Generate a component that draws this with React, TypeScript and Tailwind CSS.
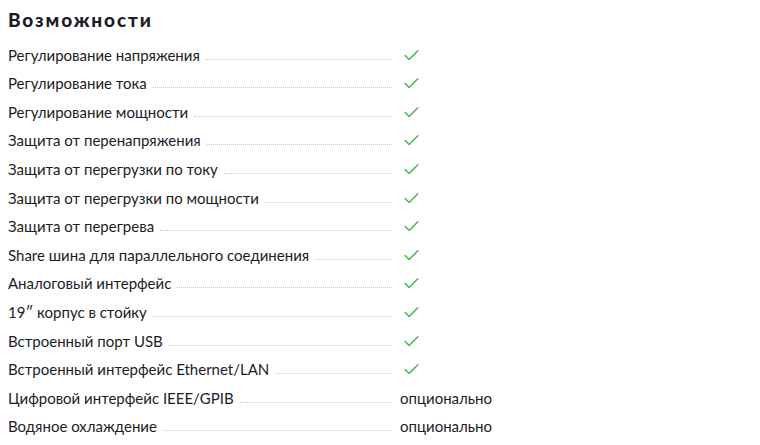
import { Check } from "lucide-react";

type Feature = {
  label: string;
  value: "yes" | string;
};

const FEATURES: Feature[] = [
  { label: "Регулирование напряжения", value: "yes" },
  { label: "Регулирование тока", value: "yes" },
  { label: "Регулирование мощности", value: "yes" },
  { label: "Защита от перенапряжения", value: "yes" },
  { label: "Защита от перегрузки по току", value: "yes" },
  { label: "Защита от перегрузки по мощности", value: "yes" },
  { label: "Защита от перегрева", value: "yes" },
  { label: "Share шина для параллельного соединения", value: "yes" },
  { label: "Аналоговый интерфейс", value: "yes" },
  { label: "19″ корпус в стойку", value: "yes" },
  { label: "Встроенный порт USB", value: "yes" },
  { label: "Встроенный интерфейс Ethernet/LAN", value: "yes" },
  { label: "Цифровой интерфейс IEEE/GPIB", value: "опционально" },
  { label: "Водяное охлаждение", value: "опционально" },
];

export default function App() {
  return (
    <div className="w-[760px] h-[445px] bg-white px-2 pt-[9px] text-[#1c1c28] font-['Lato','Noto_Sans',sans-serif]">
      <h2 className="text-[19px] font-black leading-[22px] tracking-[1.9px]">Возможности</h2>
      <ul className="mt-[10px]">
        {FEATURES.map((f) => (
          <li key={f.label} className="flex items-end h-[28.6px] pb-[6px]">
            <div className="flex items-end w-[384px]">
              <span className="text-[15px] leading-[18px] whitespace-nowrap">{f.label}</span>
              <span className="flex-1 ml-[6px] mb-[4px] border-b border-dotted border-[#c5c9d2]" />
            </div>
            <div className="ml-[8px] flex items-end h-[18px]">
              {f.value === "yes" ? (
                <Check size={19} strokeWidth={1.8} className="text-[#43b649] ml-[2px] -mb-[1px]" />
              ) : (
                <span className="text-[15px] leading-[18px]">{f.value}</span>
              )}
            </div>
          </li>
        ))}
      </ul>
    </div>
  );
}
